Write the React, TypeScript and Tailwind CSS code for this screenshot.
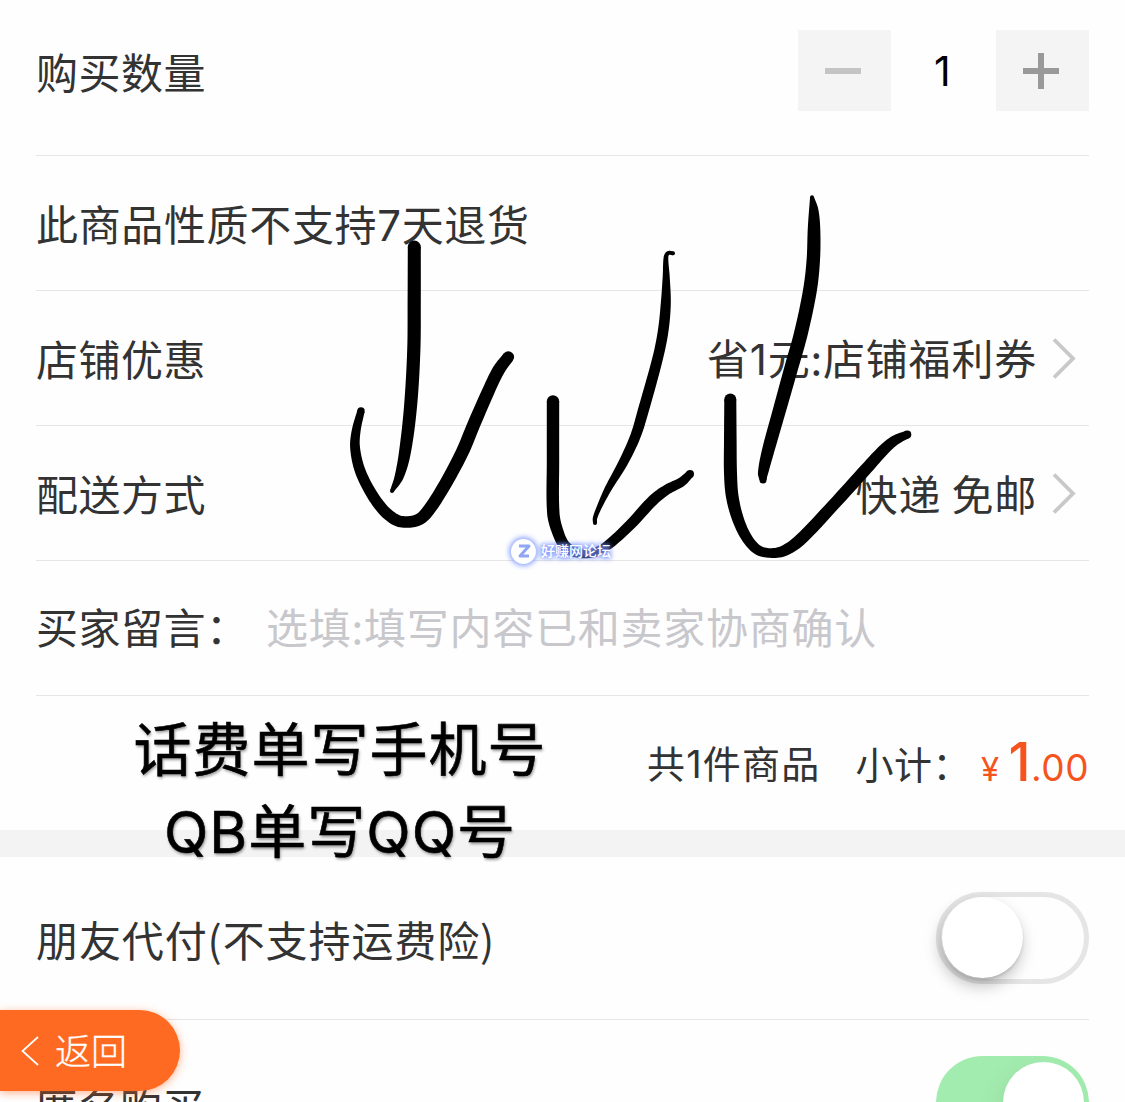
import React from "react";

type BrushPoint = [x: number, y: number, radius: number];

const STROKES: BrushPoint[][] = [
  [[414.3, 247, 6.5], [414.2, 300, 6.6], [413.8, 350, 6.6], [410.5, 406.7, 6.5], [404.8, 453, 5.9], [399, 477, 4.5], [392, 491, 2]],
  [[361, 411, 3.7], [356.3, 430, 4.4], [355, 446.7, 4.9], [359.3, 468.3, 5.3], [369.3, 490, 5.5], [383.3, 510, 5.7], [396.7, 520.3, 5.8], [408.3, 522, 5.8], [419.3, 519.3, 6], [428, 511, 6.2], [443.3, 487.5, 6.3], [461.7, 453.3, 6.5], [474, 424, 6.5], [490, 387.5, 6.3], [499, 369.5, 6.2], [508.3, 357, 5.8]],
  [[673, 253.3, 2], [668.2, 253, 2], [666, 257, 2.3], [666.2, 276.7, 3.5], [665.8, 303.3, 5], [663.3, 330, 5.3], [658, 357, 5.3], [644, 408, 5.5], [635.5, 436, 5.2], [623, 463, 4.7], [608, 489, 3.5], [598.3, 509.3, 2.5], [595, 518.3, 2.2], [595, 523, 2]],
  [[553, 401.5, 6.2], [553, 460, 6.2], [553.3, 513, 6.2], [557.8, 532, 5.8], [565, 546, 5.5], [577, 552.5, 5], [593, 552.8, 4.5], [606.7, 546, 4.8], [630, 525, 5.3], [653.3, 500, 5.5], [667, 489.5, 5.1], [681.5, 482, 4.7], [690, 474, 4]],
  [[812, 197.2, 2], [813.7, 210, 4.7], [814, 230, 6.3], [813.3, 260, 6.7], [810, 290, 6.9], [801, 333, 6.9], [791.5, 367, 6.9], [779.5, 410, 6.6], [768.3, 450, 6.2], [763, 473, 5.1], [763, 480, 3.5]],
  [[730.3, 399.5, 6], [730.3, 440, 6.3], [730.5, 473.3, 6.5], [732.3, 496.7, 6.3], [738.3, 520, 5.8], [747.5, 539, 5.3], [758, 550, 5], [770, 553, 4.8], [783.5, 551, 5.5], [800, 540, 6], [833.3, 505, 6], [866.7, 468.3, 6], [884, 449.5, 5.6], [895, 440.3, 5], [907.3, 434.5, 4]],
];

/** Samples a smooth cubic curve, interpolating the brush radius as well. */
function samplePoints(points: BrushPoint[]): BrushPoint[] {
  const out: BrushPoint[] = [];
  for (let i = 0; i < points.length - 1; i++) {
    const a = points[Math.max(0, i - 1)];
    const b = points[i];
    const c = points[i + 1];
    const d = points[Math.min(points.length - 1, i + 2)];
    const len = Math.hypot(c[0] - b[0], c[1] - b[1]);
    const before = Math.hypot(b[0] - a[0], b[1] - a[1]);
    const after = Math.hypot(d[0] - c[0], d[1] - c[1]);
    for (let s = 0; s < 8; s++) {
      const t = s / 8;
      const t2 = t * t;
      const t3 = t2 * t;
      const mix = (k: 0 | 1 | 2) => {
        const m1 = ((c[k] - a[k]) / (before + len)) * len;
        const m2 = ((d[k] - b[k]) / (after + len)) * len;
        return (2 * t3 - 3 * t2 + 1) * b[k] + (t3 - 2 * t2 + t) * m1 + (3 * t2 - 2 * t3) * c[k] + (t3 - t2) * m2;
      };
      out.push([mix(0), mix(1), mix(2)]);
    }
  }
  out.push(points[points.length - 1]);
  return out;
}

/** A stroke of varying width: a closed outline with round ends. */
function Brush({ points }: { points: BrushPoint[] }) {
  const pts = samplePoints(points);
  const left: string[] = [];
  const right: string[] = [];
  pts.forEach(([x, y, r], i) => {
    const p = pts[Math.max(0, i - 1)];
    const n = pts[Math.min(pts.length - 1, i + 1)];
    const len = Math.hypot(n[0] - p[0], n[1] - p[1]) || 1;
    const nx = (-(n[1] - p[1]) / len) * r;
    const ny = ((n[0] - p[0]) / len) * r;
    left.push(`${(x + nx).toFixed(2)} ${(y + ny).toFixed(2)}`);
    right.unshift(`${(x - nx).toFixed(2)} ${(y - ny).toFixed(2)}`);
  });
  const first = pts[0];
  const last = pts[pts.length - 1];
  return (
    <g>
      <path d={`M${[...left, ...right].join(" L")} Z`} />
      <circle cx={first[0]} cy={first[1]} r={first[2]} />
      <circle cx={last[0]} cy={last[1]} r={last[2]} />
    </g>
  );
}

function Row({ children, className = "" }: { children: React.ReactNode; className?: string }) {
  return <div className={`mx-9 flex items-center justify-between border-b border-[#e6e6e6] ${className}`}>{children}</div>;
}

function Chevron() {
  return (
    <svg width="24" height="42" viewBox="0 0 24 42" fill="none" stroke="#c8c8c8" strokeWidth="3.8" className="shrink-0">
      <path d="M2 2.5 L21 21.5 L2 40.5" />
    </svg>
  );
}

const LATIN = "font-['Inter','Noto_Sans_CJK_SC',sans-serif]";

export default function App() {
  return (
    <div className="relative h-[1102px] w-[1125px] overflow-hidden bg-[#fefefe] font-['Noto_Sans_CJK_SC',sans-serif] text-[42px] leading-[60px] tracking-[0.5px] whitespace-nowrap text-[#333]">
      <Row className="h-[156px] pb-[15px]">
        <span className="pt-px">购买数量</span>
        <div className="flex items-center">
          <div className="flex h-[81px] w-[93px] items-center justify-center bg-[#f4f4f4] pt-px pr-[3px]">
            <div className="h-1.5 w-9 bg-[#c4c4c4]" />
          </div>
          <span className={`w-[105px] pt-0.5 pr-0.5 text-center text-[41px] text-black ${LATIN}`}>1</span>
          <div className="grid h-[81px] w-[93px] place-items-center bg-[#f4f4f4] pt-px pr-[3px]">
            <div className="col-start-1 row-start-1 h-1.5 w-9 bg-[#999]" />
            <div className="col-start-1 row-start-1 h-9 w-1.5 bg-[#999]" />
          </div>
        </div>
      </Row>
      <Row className="h-[135px] pt-0.5">
        <span className="tracking-[0.65px]">此商品性质不支持<span className={LATIN}>7</span>天退货</span>
      </Row>
      <Row className="h-[135px]">
        <span className="pb-px">店铺优惠</span>
        <div className="flex items-center gap-[15px] pr-[13px]">
          <span className="pt-px tracking-[0.8px]">省<span className={LATIN}>1</span>元:店铺福利券</span>
          <Chevron />
        </div>
      </Row>
      <Row className="h-[135px]">
        <span className="pb-px">配送方式</span>
        <div className="flex items-center gap-[15px] pr-[13px]">
          <span className="tracking-[0.8px]">快递 免邮</span>
          <Chevron />
        </div>
      </Row>
      <Row className="h-[135px] pb-1">
        <div className="flex">
          <span className="w-[230px]">买家留言：</span>
          <span className="tracking-[0.75px] text-[#c7c7cc]">选填:填写内容已和卖家协商确认</span>
        </div>
      </Row>
      <div className="mx-9 flex h-[134px] items-center justify-end text-[38px]">
        <span className="mr-[35px] tracking-[1.2px]">共<span className={LATIN}>1</span>件商品</span>
        <span className="mr-[10px]">小计：</span>
        <span className={`flex items-baseline pt-1 text-[#f5541e] ${LATIN}`}>
          <span className="mr-[9px] text-[33px]">¥</span>
          <span className="text-[53px] font-medium">1</span>
          <span className="text-[37px]">.00</span>
        </span>
      </div>
      <div className="h-[27px] bg-[#f3f3f3]" />
      <Row className="h-[163px]">
        <span className="pt-0.5 tracking-[0.9px]">朋友代付(不支持运费险)</span>
        <div className="h-[92px] w-[153px] rounded-full border-[5.5px] border-[#e5e5e5]">
          <div className="ml-px size-[81px] rounded-full bg-white shadow-[-2px_8px_16px_rgba(0,0,0,0.25),0_2px_3px_rgba(0,0,0,0.12)]" />
        </div>
      </Row>
      <div className="mx-9 flex h-[165px] items-center justify-between">
        <span className="pt-1.5 tracking-normal">匿名购买</span>
        <div className="flex h-[93px] w-[153px] items-center justify-end rounded-full bg-[#a3ecaf] pr-[5.5px]">
          <div className="size-[81px] rounded-full bg-white shadow-[-6px_6px_24px_rgba(0,0,0,0.06)]" />
        </div>
      </div>

      <svg className="pointer-events-none absolute inset-0" width="1125" height="1102" viewBox="0 0 1125 1102" fill="#000">
        {STROKES.map((points, i) => (
          <Brush key={i} points={points} />
        ))}
      </svg>

      <div className="absolute top-[538px] left-[511px] flex items-center gap-[5px] text-[14px] leading-6 tracking-normal text-white">
        <div className="flex size-[25px] items-center justify-center rounded-full bg-white shadow-[0_0_5px_2px_rgba(110,140,255,0.75)]">
          <svg width="14" height="14" viewBox="0 0 14 14" fill="none" stroke="#8fa6f2" strokeWidth="3" strokeLinejoin="round">
            <path d="M2 2 H12 L3 12 H12" />
          </svg>
        </div>
        <span className="pb-0.5 font-medium [text-shadow:0_0_4px_#6482ff,0_0_7px_#829bff,0_0_5px_#829bff]">好赚网论坛</span>
      </div>

      <div className="absolute top-[705px] left-[120px] flex w-[440px] flex-col items-center text-[58px] leading-[82px] tracking-[1px] text-black [-webkit-text-stroke:0.6px_#000] [text-shadow:1px_2px_3px_rgba(0,0,0,0.4)]">
        <span>话费单写手机号</span>
        <span><span className={LATIN}>QB</span>单写<span className={LATIN}>QQ</span>号</span>
      </div>

      <div className="absolute top-[1010px] left-0 flex h-[81px] w-[180px] items-center gap-4 rounded-r-full bg-[#ff6a22] pl-[21px] text-[36px] font-light text-white shadow-[0_2px_8px_rgba(255,106,34,0.5)]">
        <svg width="18" height="30" viewBox="0 0 18 30" fill="none" stroke="white" strokeWidth="1.7">
          <path d="M17 1 L1.5 15 L17 29" />
        </svg>
        <span className="pb-1 tracking-normal [-webkit-text-stroke:0.3px_#fff]">返回</span>
      </div>
    </div>
  );
}
